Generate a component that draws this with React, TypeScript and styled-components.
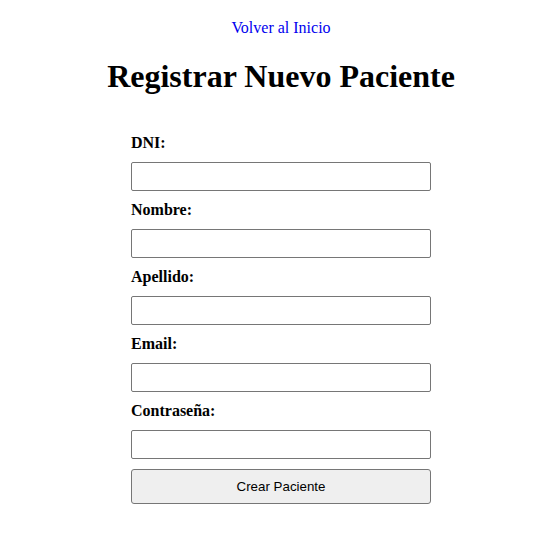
import React from 'react';
import styled, { createGlobalStyle } from 'styled-components';

const GlobalStyle = createGlobalStyle`
    body {
        margin: 8px;
        font-family: "Liberation Serif", "Times New Roman", serif;
        background: #ffffff;
        color: #000000;
    }
`;

const Page = styled.div`
    padding-left: 4px;
`;

const Nav = styled.nav`
    padding-top: 11px;
    text-align: center;
`;

const HomeLink = styled.a`
    color: #0000ee;
    text-decoration: none;
    font-size: 16px;
`;

const Title = styled.h1`
    text-align: center;
    font-size: 32px;
    font-weight: bold;
    margin: 21px 0;
`;

const Form = styled.form`
    width: 300px;
    margin: 0 auto;
    padding-top: 18px;
    display: flex;
    flex-direction: column;
`;

const Label = styled.label`
    font-weight: bold;
    font-size: 16px;
    margin-bottom: 10px;
`;

const Input = styled.input`
    box-sizing: border-box;
    width: 100%;
    height: 29px;
    padding: 4px 6px;
    margin-bottom: 10px;
    border: 1px solid #767676;
    border-radius: 2px;
    font-family: "Liberation Sans", Arial, sans-serif;
    font-size: 13.33px;
`;

const Submit = styled.button`
    box-sizing: border-box;
    width: 100%;
    height: 35px;
    border: 1px solid #767676;
    border-radius: 3px;
    background: #efefef;
    color: #000000;
    font-family: "Liberation Sans", Arial, sans-serif;
    font-size: 13.33px;
`;

const fields = [
    { id: 'dni', label: 'DNI:', type: 'text' },
    { id: 'nombre', label: 'Nombre:', type: 'text' },
    { id: 'apellido', label: 'Apellido:', type: 'text' },
    { id: 'email', label: 'Email:', type: 'email' },
    { id: 'password', label: 'Contraseña:', type: 'password' },
];

export default function App() {
    return (
        <Page>
            <GlobalStyle />
            <Nav>
                <HomeLink href="#">Volver al Inicio</HomeLink>
            </Nav>
            <Title>Registrar Nuevo Paciente</Title>
            <Form onSubmit={e => e.preventDefault()}>
                {fields.map(f => (
                    <React.Fragment key={f.id}>
                        <Label htmlFor={f.id}>{f.label}</Label>
                        <Input id={f.id} name={f.id} type={f.type} />
                    </React.Fragment>
                ))}
                <Submit type="submit">Crear Paciente</Submit>
            </Form>
        </Page>
    );
}
